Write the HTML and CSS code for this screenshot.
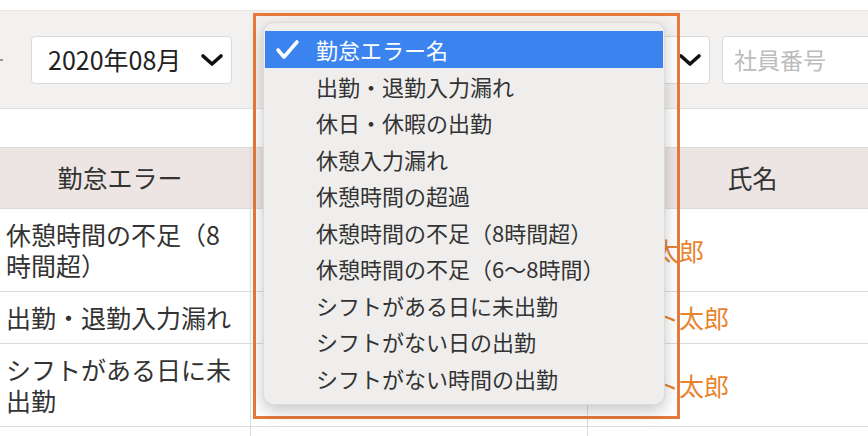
FILE: index.html
```html
<!DOCTYPE html>
<html lang="ja">

<head>
    <meta charset="UTF-8">
    <meta name="viewport" content="width=device-width, initial-scale=1.0">
    <link rel="stylesheet" href="styles.css">
    <title>勤怠エラー一覧</title>
</head>

<body>
    <div class="page">
        <div class="filter-bar">
            <span class="filter-sep"></span>
            <div class="select select-month">
                <span>2020年08月</span>
                <svg class="chevron" width="24" height="14" viewBox="0 0 24 14">
                    <polyline points="3,3 12,11 21,3" />
                </svg>
            </div>
            <div class="select select-error">
                <span>勤怠エラー名</span>
                <svg class="chevron" width="24" height="14" viewBox="0 0 24 14">
                    <polyline points="3,3 12,11 21,3" />
                </svg>
            </div>
            <div class="input-box">社員番号</div>
        </div>

        <table class="error-table">
            <colgroup>
                <col class="col-error">
                <col class="col-date">
                <col class="col-name">
            </colgroup>
            <thead>
                <tr>
                    <th>勤怠エラー</th>
                    <th>日付</th>
                    <th>氏名</th>
                </tr>
            </thead>
            <tbody>
                <tr>
                    <td>休憩時間の不足（8時間超）</td>
                    <td></td>
                    <td class="name">山田太郎</td>
                </tr>
                <tr>
                    <td>出勤・退勤入力漏れ</td>
                    <td></td>
                    <td class="name">テスト太郎</td>
                </tr>
                <tr>
                    <td>シフトがある日に未出勤</td>
                    <td></td>
                    <td class="name">テスト太郎</td>
                </tr>
                <tr>
                    <td>休日・休暇の出勤</td>
                    <td></td>
                    <td class="name">テスト太郎</td>
                </tr>
            </tbody>
        </table>
    </div>

    <!-- highlight drawn round the open menu -->
    <div class="highlight"></div>

    <ul class="popup-menu">
        <li class="selected">
            <svg class="check" width="26" height="22" viewBox="0 0 26 22">
                <polyline points="3,11 9,18 22,3" />
            </svg>
            勤怠エラー名
        </li>
        <li>出勤・退勤入力漏れ</li>
        <li>休日・休暇の出勤</li>
        <li>休憩入力漏れ</li>
        <li>休憩時間の超過</li>
        <li>休憩時間の不足（8時間超）</li>
        <li>休憩時間の不足（6〜8時間）</li>
        <li>シフトがある日に未出勤</li>
        <li>シフトがない日の出勤</li>
        <li>シフトがない時間の出勤</li>
    </ul>
</body>

</html>
```

FILE: styles.css
```css
html,
body {
    margin: 0;
    height: 100%;
    overflow: hidden;
    background-color: #fff;
}

body {
    position: relative;
    font-family: "Noto Sans CJK JP", "Noto Sans", sans-serif;
    color: #333;
}

.page {
    padding-top: 10px;
}

/* filter bar */
.filter-bar {
    display: flex;
    align-items: center;
    height: 99px;
    box-sizing: border-box;
    background-color: #f3f1ef;
    border-top: 1px solid #ebe8e5;
    border-bottom: 1px solid #e2dedb;
}

.filter-sep {
    flex: 0 0 3px;
    height: 2px;
    background-color: #999;
}

.select {
    display: flex;
    align-items: center;
    justify-content: space-between;
    height: 48px;
    box-sizing: border-box;
    padding: 0 7px 0 16px;
    background-color: #fff;
    border: 1px solid #dcdad8;
    border-radius: 4px;
    font-size: 25px;
    line-height: 1;
    color: #222;
}

.select-month {
    flex: 0 0 201px;
    margin-left: 28px;
}

.select-error {
    flex: 0 0 444px;
    margin-left: 34px;
}

.chevron polyline {
    fill: none;
    stroke: #111;
    stroke-width: 3.6;
    stroke-linecap: round;
    stroke-linejoin: round;
}

.input-box {
    flex: 0 0 220px;
    display: flex;
    align-items: center;
    height: 48px;
    box-sizing: border-box;
    margin-left: 12px;
    padding-left: 11px;
    background-color: #fff;
    border: 1px solid #dcdad8;
    border-radius: 4px;
    font-size: 23px;
    line-height: 1;
    color: #bcbcbc;
}

/* table */
.error-table {
    margin-top: 38px;
    margin-left: -11px;
    width: 928px;
    table-layout: fixed;
    border-collapse: collapse;
    font-size: 25px;
    line-height: 31px;
}

.col-error {
    width: 261px;
}

.col-date {
    width: 337px;
}

.col-name {
    width: 330px;
}

.error-table th,
.error-table td {
    border: 1px solid #dedcdb;
    padding: 10px 16px;
    vertical-align: middle;
}

.error-table th {
    padding: 14px 16px 15px;
    background-color: #ece5e3;
    font-weight: normal;
    color: #333;
}

.error-table td {
    color: #333;
}

.error-table td.name {
    color: #e8842e;
}

/* open menu */
.highlight {
    position: absolute;
    left: 253px;
    top: 13px;
    width: 427px;
    height: 406px;
    box-sizing: border-box;
    border: 3px solid #e57a3c;
}

.popup-menu {
    position: absolute;
    left: 263px;
    top: 22px;
    width: 402px;
    height: 383px;
    box-sizing: border-box;
    margin: 0;
    padding: 8px 1px;
    list-style: none;
    background-color: #efeeed;
    border: 1px solid rgba(0, 0, 0, 0.08);
    border-radius: 10px;
    box-shadow: 0 6px 16px rgba(0, 0, 0, 0.22);
    font-size: 22px;
    color: #333;
}

.popup-menu li {
    position: relative;
    display: flex;
    align-items: center;
    height: 36.5px;
    padding-left: 51px;
    line-height: 1;
}

.popup-menu li.selected {
    background-color: #3b84f0;
    color: #fff;
}

.check {
    position: absolute;
    left: 10px;
    top: 8px;
}

.check polyline {
    fill: none;
    stroke: #fff;
    stroke-width: 3.6;
    stroke-linecap: round;
    stroke-linejoin: round;
}
```
